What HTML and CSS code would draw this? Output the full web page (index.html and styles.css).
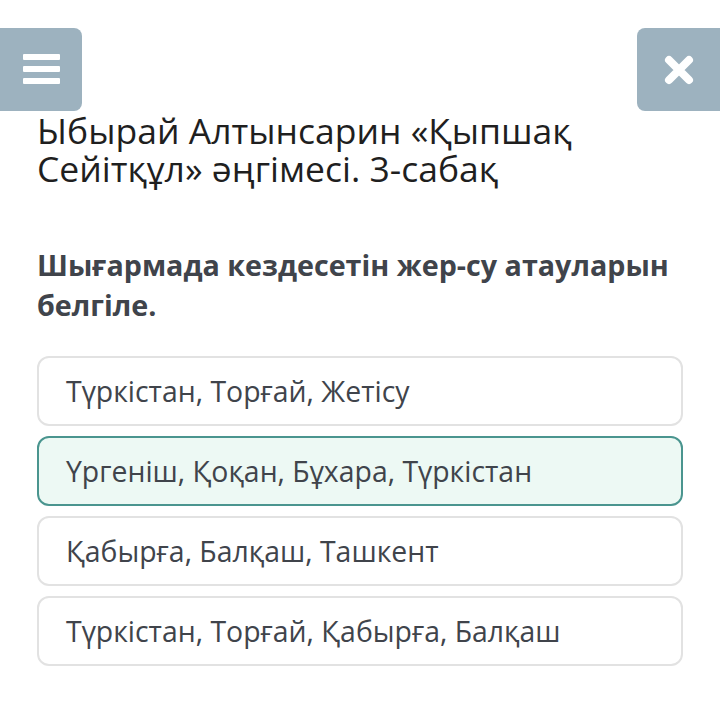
FILE: index.html
```html
<!DOCTYPE html>
<html lang="kk">
<head>
  <meta charset="UTF-8" />
  <meta name="viewport" content="width=device-width, initial-scale=1.0" />
  <title>Ыбырай Алтынсарин</title>
  <link rel="stylesheet" href="styles.css">
</head>
<body>
  <header class="topbar">
    <button class="icon-btn menu-btn" aria-label="Мәзір">
      <svg width="37" height="31" viewBox="0 0 37 31">
        <rect x="0" y="0" width="37" height="6" rx="1" fill="#fff" />
        <rect x="0" y="12" width="37" height="6" rx="1" fill="#fff" />
        <rect x="0" y="24" width="37" height="6" rx="1" fill="#fff" />
      </svg>
    </button>
    <button class="icon-btn close-btn" aria-label="Жабу">
      <svg width="30" height="30" viewBox="0 0 30 30">
        <path d="M5 5 L25 25 M25 5 L5 25" stroke="#fff" stroke-width="8" stroke-linecap="round" />
      </svg>
    </button>
  </header>

  <main class="quiz">
    <h1 class="quiz-title">Ыбырай Алтынсарин «Қыпшақ Сейітқұл» әңгімесі. 3-сабақ</h1>
    <h2 class="question">Шығармада кездесетін жер-су атауларын белгіле.</h2>

    <div class="answers">
      <div class="answer">Түркістан, Торғай, Жетісу</div>
      <div class="answer selected">Үргеніш, Қоқан, Бұхара, Түркістан</div>
      <div class="answer">Қабырға, Балқаш, Ташкент</div>
      <div class="answer">Түркістан, Торғай, Қабырға, Балқаш</div>
    </div>
  </main>
</body>
</html>
```

FILE: styles.css
```css
:root {
  --btn-bg: #9db2bf;
  --text-dark: #1f1f1f;
  --text-main: #40444b;
  --border: #e2e2e2;
  --accent: #4a958f;
  --accent-bg: #edf9f4;
}
body {
  margin: 0;
  background: #fff;
  font-family: 'Open Sans', 'Noto Sans', sans-serif;
  color: var(--text-main);
}
.topbar {
  display: flex;
  justify-content: space-between;
  padding-top: 28px;
}
.icon-btn {
  width: 82px;
  height: 83px;
  border: none;
  background: var(--btn-bg);
  display: flex;
  align-items: center;
  justify-content: center;
  padding: 0;
  cursor: pointer;
}
.menu-btn {
  border-radius: 0 8px 8px 0;
}
.close-btn {
  width: 83px;
  border-radius: 8px 0 0 8px;
}
.quiz {
  padding: 0 37px;
}
.quiz-title {
  margin: 0;
  font-size: 35.5px;
  font-weight: 400;
  line-height: 38px;
  color: var(--text-dark);
  max-width: 600px;
}
.question {
  margin: 58px 0 31px;
  font-size: 28.7px;
  font-weight: 700;
  line-height: 40px;
  color: var(--text-main);
}
.answers {
  display: flex;
  flex-direction: column;
  gap: 10px;
}
.answer {
  height: 66px;
  display: flex;
  align-items: center;
  padding: 0 27px;
  border: 2px solid var(--border);
  border-radius: 12px;
  font-size: 28.4px;
  color: var(--text-main);
}
.answer.selected {
  border-color: var(--accent);
  background: var(--accent-bg);
}
```
